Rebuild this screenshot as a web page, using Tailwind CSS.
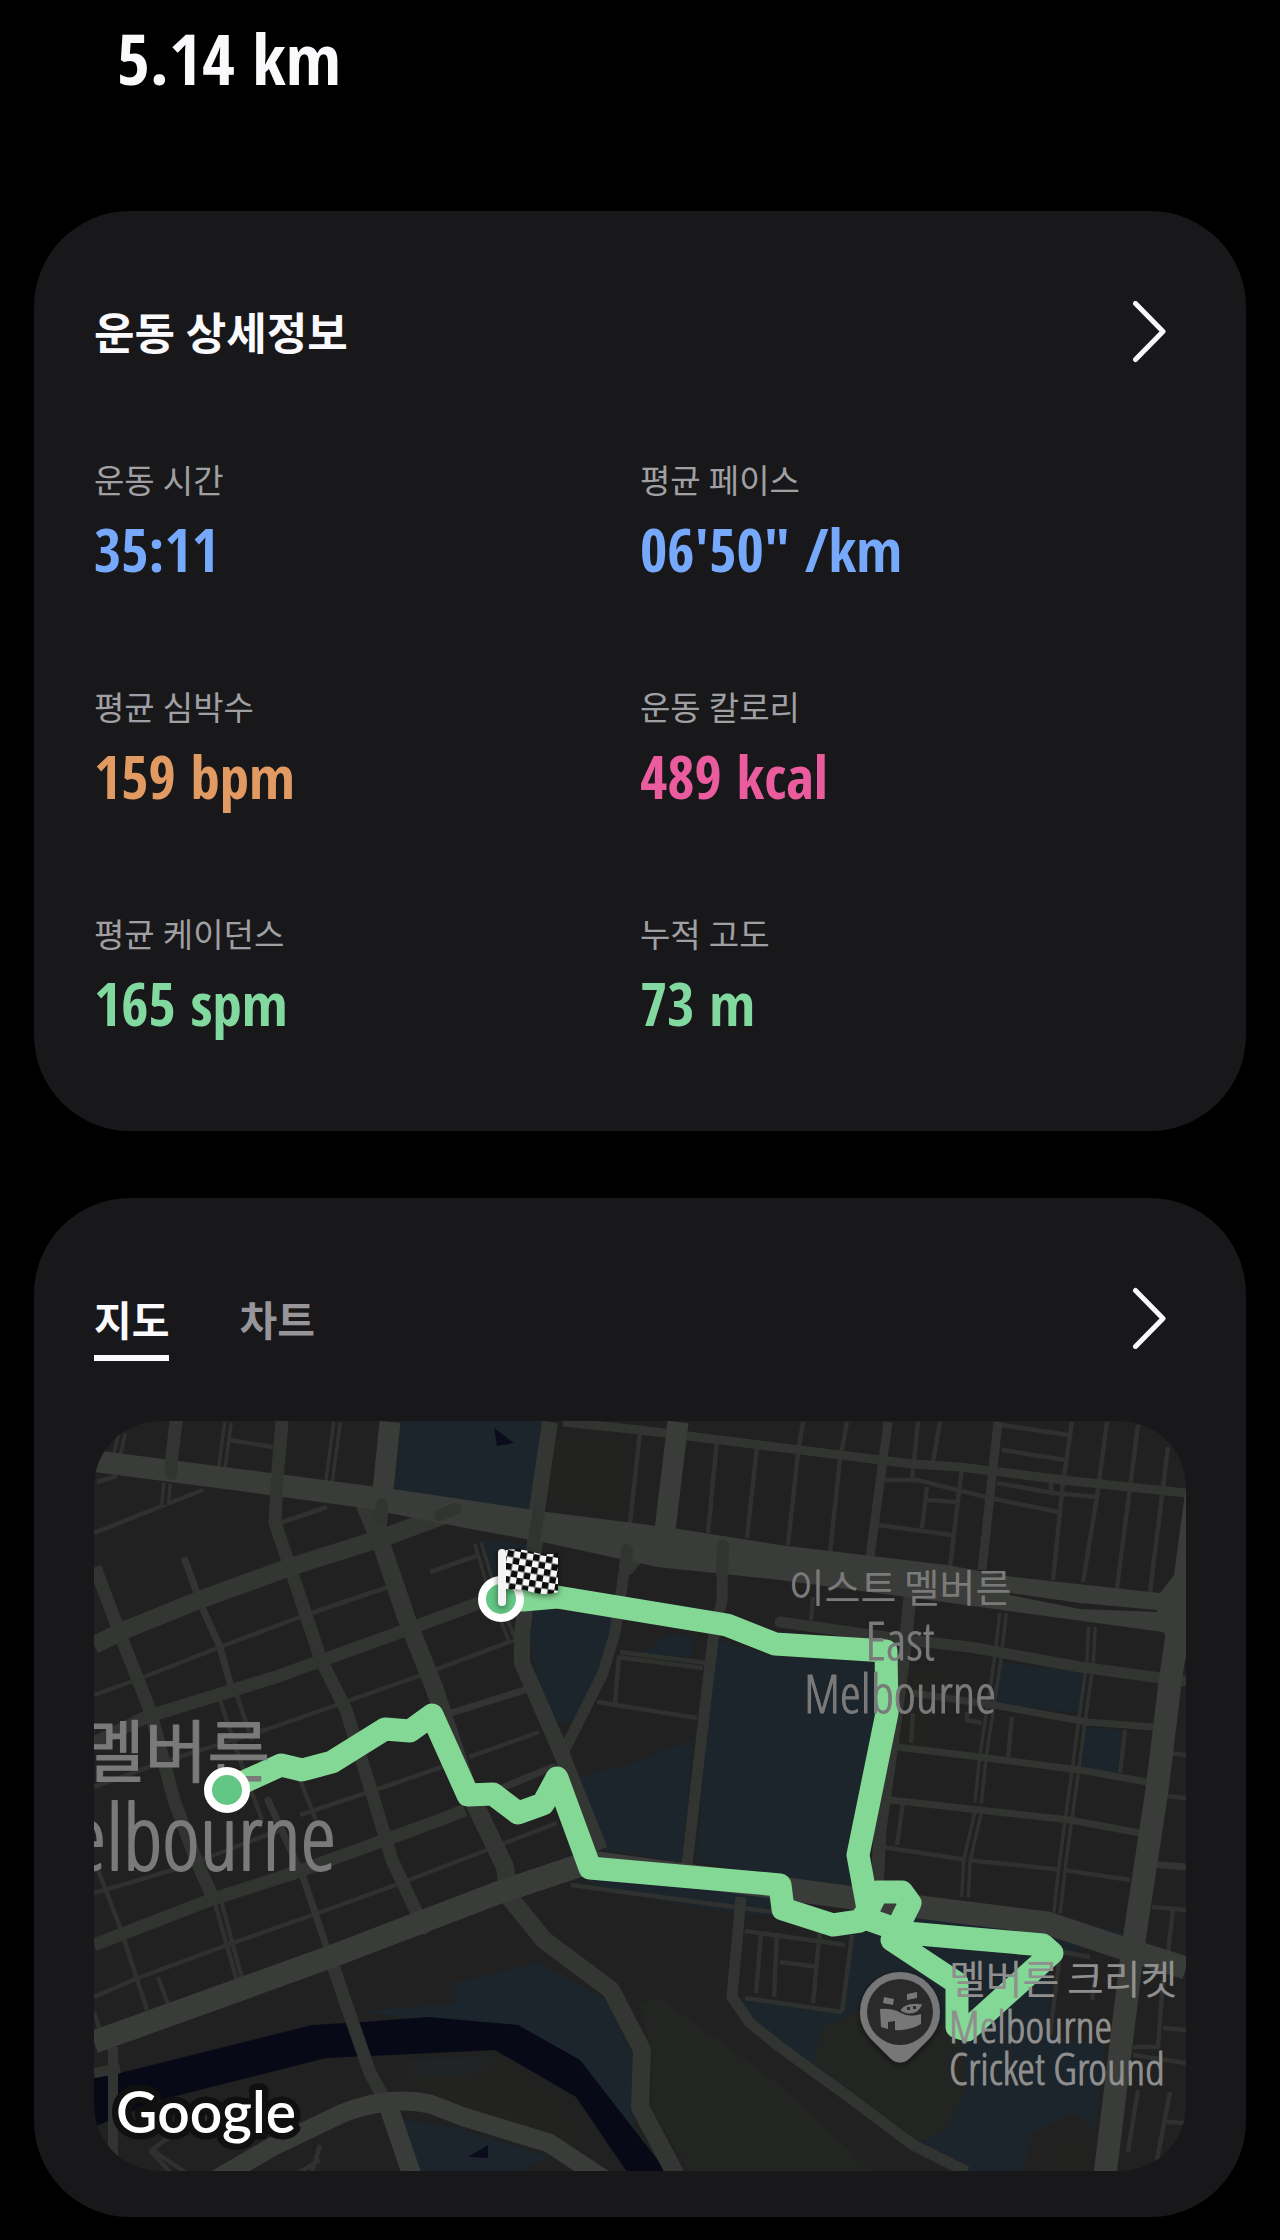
<!DOCTYPE html>
<html lang="ko">
<head>
  <meta charset="UTF-8" />
  <meta name="viewport" content="width=device-width, initial-scale=1.0" />
  <title>운동 상세정보</title>
  <script src="https://cdn.jsdelivr.net/npm/@tailwindcss/browser@4"></script>
</head>
<body class="bg-black text-[#fafafc] min-h-screen font-['Open_Sans_Condensed','Noto_Sans_CJK_KR',sans-serif]">
  <header class="px-[117px] pt-2.5 pb-[105px]">
    <p class="text-[71px] leading-[96px] font-bold">5.14 km</p>
  </header>

  <main class="flex flex-col gap-[67px] px-[34px] pb-6">
    <section class="rounded-[96px] bg-[#18181a] px-[60px] pt-[90px] pb-[86px]">
      <div class="flex items-center justify-between">
        <h1 class="text-[44px] leading-16 font-bold">운동 상세정보</h1>
        <button type="button" aria-label="운동 상세정보 열기" class="mr-4">
          <svg class="w-10 h-16" viewBox="0 0 40 64" fill="none" stroke="currentColor" stroke-width="5" stroke-linecap="round" stroke-linejoin="round"><path d="M5.500 2.500 33 30.500 5.500 58.500" /></svg>
        </button>
      </div>

      <dl class="mt-[90px] grid grid-cols-2 gap-y-[91px]">
        <div>
          <dt class="text-[33px] leading-[52px] text-[#a0a0a4]">운동 시간</dt>
          <dd class="text-[59px] leading-[84px] font-bold text-[#76a8fb]">35:11</dd>
        </div>
        <div>
          <dt class="text-[33px] leading-[52px] text-[#a0a0a4]">평균 페이스</dt>
          <dd class="text-[59px] leading-[84px] font-bold text-[#76a8fb]">06'50" /km</dd>
        </div>
        <div>
          <dt class="text-[33px] leading-[52px] text-[#a0a0a4]">평균 심박수</dt>
          <dd class="text-[59px] leading-[84px] font-bold text-[#e29a63]">159 bpm</dd>
        </div>
        <div>
          <dt class="text-[33px] leading-[52px] text-[#a0a0a4]">운동 칼로리</dt>
          <dd class="text-[59px] leading-[84px] font-bold text-[#ea5c9d]">489 kcal</dd>
        </div>
        <div>
          <dt class="text-[33px] leading-[52px] text-[#a0a0a4]">평균 케이던스</dt>
          <dd class="text-[59px] leading-[84px] font-bold text-[#82d9a0]">165 spm</dd>
        </div>
        <div>
          <dt class="text-[33px] leading-[52px] text-[#a0a0a4]">누적 고도</dt>
          <dd class="text-[59px] leading-[84px] font-bold text-[#82d9a0]">73 m</dd>
        </div>
      </dl>
    </section>

    <section class="rounded-[96px] bg-[#18181a] px-[60px] pt-[87px] pb-[46px]">
      <div class="flex items-start justify-between">
        <div role="tablist" class="flex gap-[70px] text-[41px] leading-[70px] font-bold">
          <button type="button" role="tab" aria-selected="true" class="border-b-6 border-[#fafafc]">지도</button>
          <button type="button" role="tab" aria-selected="false" class="border-b-6 border-transparent text-[#97959a]">차트</button>
        </div>
        <button type="button" aria-label="지도 열기" class="mr-4">
          <svg class="w-10 h-16" viewBox="0 0 40 64" fill="none" stroke="currentColor" stroke-width="5" stroke-linecap="round" stroke-linejoin="round"><path d="M5.500 5.500 33 33.500 5.500 61.500" /></svg>
        </button>
      </div>

      <div class="mt-[60px] overflow-hidden rounded-[66px] bg-[#212121]">
        <svg class="block w-full" viewBox="94 1421 1092 750" role="img" aria-label="운동 경로 지도">
          <defs>
            <pattern id="checks" width="13" height="13" patternUnits="userSpaceOnUse" patternTransform="translate(508 1550) rotate(9)">
              <rect width="13" height="13" fill="#f6f6f6" />
              <path d="M0 0h6.500v13h6.500v-6.500H0z" fill="#0a0a0a" />
            </pattern>
            <filter id="shadow" x="-30%" y="-30%" width="160%" height="160%">
              <feDropShadow dx="0" dy="2" stdDeviation="3" flood-color="#000" flood-opacity="0.5" />
            </filter>
          </defs>

          <!-- parks -->
          <g fill="#1c252b">
            <path d="M402 1421 394 1492 531 1510 551 1421z" />
            <path d="M483 1538 527 1545 523 1585 493 1578z" />
            <path d="M532 1607 617 1618 610 1650 597 1687 570 1722 557 1723 537 1677 530 1640z" />
            <path d="M640 1653 673 1633 693 1638 692 1658z" />
            <path d="M717 1640 775 1656 886 1662 850 1835 855 1890 696 1862 708 1720z" />
            <path d="M577 1777 627 1765 693 1740 682 1862 603 1850z" />
            <path d="M583 1878 780 1895 780 1918 700 1908 592 1885z" />
            <path d="M1000 1662 1083 1672 1080 1713 995 1703z" />
            <path d="M1085 1727 1122 1730 1117 1773 1082 1768z" />
            <path d="M853 1905 1060 1922 1080 1950 1053 1957 1047 2035 1105 2045 1095 2130 1073 2113 1033 2133 1022 2172 967 2172 913 2140 780 2043 745 2020 732 1998 780 2003 842 2012z" />
            <path d="M1063 1918 1123 1933 1122 1940 1085 1937z" />
            <path d="M361 2012 455 2003V1983L540 1962 607 2000 636 2063 634 2130 560 2070 500 2030z" />
            <path d="M410 2060 497 2055 473 2075 410 2077z" />
            <path d="M401 2120 455 2127 549 2157 517 2172H419z" />
          </g>
          <g fill="#232522">
            <path d="M548 1500 555 1440H630V1520z" opacity=".6" />
            <path d="M638 2003 660 1998 780 2085 873 2172H690L652 2110V2050z" />
            <path d="M823 2027 860 2010 960 2030 967 2087 947 2130 920 2143 813 2063z" />
            <path d="M910 1665 945 1668 935 1750 895 1745z" opacity=".7" />
            <path d="M395 2062 500 2055 570 2110 590 2150 430 2100z" opacity=".6" />
            <path d="M1045 2150 1072 2135 1090 2150 1088 2172H1043z" opacity=".7" />
          </g>

          <!-- river -->
          <path d="M94 2078 120 2073 312 2025Q370 2022 428 2017L518 2025 580 2060 629 2123 667 2172H627L576 2097 495 2050 326 2058 160 2100 94 2127z" fill="#070916" />
          <path d="M494 1428 514 1443 497 1446zM468 2157 488 2145V2158z" fill="#0a0c1c" />

          <g fill="none" stroke-linejoin="round">
            <!-- lanes -->
            <g stroke="#2f312e" stroke-width="4.500">
              <path d="M230 1440 273 1447M97 1482 117 1476M94 1533 167 1504 203 1490M280 1523 327 1507M430 1572 479 1555" />
              <path d="M94 1695 136 1680 220 1647 300 1617 388 1587M94 1787 160 1763 265 1730 342 1703 416 1677 514 1640" />
              <path d="M469 1757 539 1732M381 1788 462 1760M300 1815 381 1788M94 1893 183 1867 280 1830" />
              <path d="M94 1997 138 1978 227 1945 321 1912 401 1883 500 1845 557 1823" />
              <path d="M98 1870 120 1927 147 2010M158 1977 169 2007M94 2012 100 2030M214 1900 241 1995M221 1900 245 1990" />
              <path d="M220 1700 240 1760 262 1820M235 1690 252 1740M300 1780 316 1820" />
              <path d="M571 1885 780 1913M761 1933 756 1993M777 1933 774 1997M745 1931 845 1945M745 1998 842 2012M780 1962 818 1967M820 1930 813 2003M852 1935 842 2012" />
              <path d="M620 1652 707 1663M617 1657 703 1668M619 1657 615 1703M597 1702 697 1718M640 1432 630 1523" />
              <path d="M717 1440 708 1533M757 1447 747 1538M803 1422 798 1453 788 1545M847 1422 840 1460 830 1552" />
              <path d="M918 1422 912 1480M940 1422 933 1462M962 1467 950 1567M883 1480H917L990 1498 1058 1512M927 1487 922 1528M927 1500 957 1502M878 1525 952 1535" />
              <path d="M1002 1425 1068 1435M1002 1450 1065 1460M997 1483 1053 1493 1097 1497M1072 1422 1063 1483 1053 1580M1107 1422 1097 1497 1083 1582M1138 1425 1117 1588M1168 1447 1150 1592M1051 1480V1492" />
              <path d="M813 1597 811 1620M913 1713 911 1743M1012 1717 1008 1757M1125 1730 1120 1773M903 1803 897 1845M967 1712V1720L982 1723" />
              <path d="M883 1847 967 1860 1063 1870 1130 1880M1170 1753 1186 1755M1165 1796 1186 1798M1152 1907 1186 1910M1173 1910 1168 1953" />
              <path d="M1163 1980 1158 2047H1133M1133 2055 1186 2063M1138 2090 1128 2152M1170 2092 1157 2160M1167 2122 1184 2123M1163 2028 1186 2030M1060 1953 1050 2035M1063 1952 1090 1957M1096 1970 1092 2000" />
              <path d="M185 2172 152 2150 165 2140 230 2105M170 2172 150 2150M320 2145 312 2172M300 2172 320 2160" />
            </g>

            <!-- double lanes: a wide stroke with a land-coloured centre -->
            <g stroke="#2f312e" stroke-width="10">
              <path d="M228 1422 222 1467M337 1422 329 1482M122 1433 117 1455M167 1483 165 1505M478 1543 492 1590 512 1640" />
              <path d="M1003 1613 998 1657 983 1757 978 1803M978 1813 967 1860 965 1897M1092 1627 1090 1663 1082 1720 1075 1773 1063 1860 1057 1913" />
            </g>
            <g stroke="#212121" stroke-width="3">
              <path d="M228 1422 222 1467M337 1422 329 1482M122 1433 117 1455M167 1483 165 1505M478 1543 492 1590 512 1640" />
              <path d="M1003 1613 998 1657 983 1757 978 1803M978 1813 967 1860 965 1897M1092 1627 1090 1663 1082 1720 1075 1773 1063 1860 1057 1913" />
            </g>

            <!-- streets -->
            <g stroke="#323431" stroke-width="7">
              <path d="M185 1560 202 1607 220 1647 232 1690M451 1713 525 1690M268 1800 303 1877 330 1957M504 1787 553 1767" stroke-linecap="round" />
              <path d="M913 1693 993 1705 1087 1722 1153 1727M897 1747 980 1757 1080 1770 1147 1782M890 1800 997 1812 1070 1820 1140 1833M1140 1863 1186 1867" />
              <path d="M563 1422 640 1430 840 1455 913 1464 960 1467 1063 1480 1186 1493M888 1422 870 1557M998 1422 982 1570" stroke-width="9" />
            </g>
            <g stroke="#323431" stroke-width="13">
              <path d="M282 1422 277 1480 275 1523 290 1567 321 1660 346 1710 374 1800 392 1860 424 1928" stroke-linecap="round" />
              <path d="M176 1422 170 1472" stroke-linecap="round" />
              <path d="M95 1567 125 1647 150 1710 174 1800 196 1860 214 1900" />
              <path d="M94 1743 146 1717 276 1677 406 1630 479 1603M94 1945 210 1900 294 1873 440 1820 465 1810" />
              <path d="M627 1550 622 1587 615 1633 603 1673 563 1753M643 1552 628 1570M723 1545 722 1600 713 1640 707 1690 687 1865" stroke-width="11" stroke-linecap="round" />
              <path d="M741 1897 732 1997 750 2023 780 2047 853 2100 913 2145 967 2172" stroke-width="11" />
              <path d="M780 1622 907 1640 970 1647 1080 1667 1183 1681" stroke-width="11" stroke-linecap="round" />
              <path d="M910 1597 905 1647 893 1737 880 1830 877 1890" />
              <path d="M330 1957 370 2073 392 2113" stroke-linecap="round" />
              <path d="M113 2047V2160M94 2073 120 2068" stroke-width="10" />
            </g>
            <g stroke="#343633" stroke-width="18">
              <path d="M94 1645 125 1630 199 1600 290 1567 385 1537 458 1510" />
              <path d="M364 1503 381 1543 406 1617 434 1687 468 1790 505 1867 509 1897 544 1940 611 1990 642 2050 640 2107 676 2175" />
              <path d="M382 1505 378 1540" stroke-linecap="round" stroke-width="14" />
              <path d="M550 1422 537 1510 535 1543 528 1587 522 1633V1663L537 1697 560 1750 573 1783 600 1850" stroke-width="16" />
            </g>

            <!-- main roads -->
            <g stroke="#3a3c39" stroke-width="23">
              <path d="M390 1422 383 1490M678 1422 665 1530" stroke-width="21" />
              <path d="M94 2042 330 1957 500 1892 590 1862 780 1888 853 1898 920 1907 1047 1923 1113 1945 1186 1968" />
              <path d="M215 2180 272 2147 343 2113Q390 2095 430 2104L464 2117 549 2143 605 2180M388 2105 412 2175" stroke-width="19" />
              <path d="M1197 1490 1184 1587 1170 1683 1157 1790 1133 1947 1105 2175" />
            </g>
          </g>
          <path d="M94 1450 240 1469 400 1490 547 1512 673 1528 780 1545 947 1565 1013 1577 1160 1593 1186 1560V1660L1163 1632 980 1607 780 1580 657 1567 547 1543 450 1525 363 1508 240 1491 94 1472z" fill="#3a3c39" />
          <path d="M1010 1594 1080 1604 1157 1611 1080 1608z" fill="#212121" stroke="#212121" stroke-width="2" />
          <path d="M539 1510 533 1545M382 1504 380 1520M440 1515 455 1509M723 1546 722 1575M627 1550 625 1570M172 1455 171 1474M278 1470 276 1495" fill="none" stroke="#323431" stroke-width="12" stroke-linecap="round" />

          <!-- running route -->
          <path d="M227 1790 248 1780 281 1765 302 1770 332 1762 385 1729 410 1731 432 1715 468 1795 493 1794 518 1813 543 1804 557 1778 590 1868 780 1885 783 1909 833 1925 860 1921 868 1910 877 1892H902L910 1903 903 1917 892 1940 957 1983V2027L967 2030 1052 1953 1043 1945 907 1933 870 1920 858 1855 887 1713 886 1651 775 1644 727 1625 557 1597 523 1600H502" fill="none" stroke="#84d895" stroke-width="23" stroke-linejoin="round" />

          <!-- place names -->
          <g class="fill-[#7a7a7a] stroke-[#7a7a7a] font-['Open_Sans_Condensed_Light','Open_Sans_Condensed','Noto_Sans_CJK_KR',sans-serif]" stroke-linejoin="round">
            <text x="270" y="1777" text-anchor="end" font-size="68" stroke-width="1">멜버른</text>
            <text x="336" y="1870" text-anchor="end" font-size="90" stroke-width="2" class="font-light">Melbourne</text>
            <g text-anchor="middle" font-size="53">
              <text x="900" y="1602" font-size="39" stroke-width="0">이스트 멜버른</text>
              <text x="900" y="1660" class="font-light">East</text>
              <text x="900" y="1713" class="font-light">Melbourne</text>
            </g>
            <g font-size="45" class="fill-[#8f8f8f] stroke-[#8f8f8f]">
              <text x="949" y="1994" font-size="40" stroke-width="0">멜버른 크리켓 그라운드</text>
              <text x="949" y="2043" class="font-light">Melbourne</text>
              <text x="949" y="2085" class="font-light">Cricket Ground</text>
            </g>
          </g>

          <!-- stadium pin -->
          <g filter="url(#shadow)">
            <path d="M900 1972a40 40 0 0 0-40 40c0 12 5 21 13 29l17 17c6 6 14 6 20 0l17-17c8-8 13-17 13-29a40 40 0 0 0-40-40z" fill="#777" />
            <circle cx="900" cy="2012" r="33" fill="#2c2c2c" />
          </g>
          <g fill="#777">
            <path d="M884 1997 894 1999 893 2005 883 2003zM907 1994 917 1992V1998L907 2000z" />
            <path d="M880 2009Q892 2008 901 2013 910 2018 921 2014V2024Q909 2031 895 2030V2021L888 2022V2029L881 2027z" />
            <path d="M900 2010Q906 2001 923 2004 918 2015 908 2014 902 2013 900 2010z" stroke="#2c2c2c" />
          </g>
          <path d="M907 2007h3v3h-3zM913 2006h3v3h-3z" fill="#2c2c2c" />

          <!-- start and finish -->
          <g stroke="#fff" stroke-width="8" fill="#62c684">
            <circle cx="227" cy="1790" r="19" />
            <circle cx="501" cy="1599" r="19" />
          </g>
          <g filter="url(#shadow)">
            <path d="M506 1550Q520 1548 532 1552 545 1556 558 1553V1592Q545 1596 532 1592 520 1587 506 1590z" fill="url(#checks)" />
            <path d="M502 1553V1602" stroke="#f4f4f4" stroke-width="8" stroke-linecap="round" />
          </g>

          <text x="116" y="2133" font-size="57" class="fill-white font-['Lato'] font-semibold" stroke="#101010" stroke-width="13" stroke-linejoin="round" paint-order="stroke">Google</text>
        </svg>
      </div>
    </section>
  </main>
</body>
</html>
